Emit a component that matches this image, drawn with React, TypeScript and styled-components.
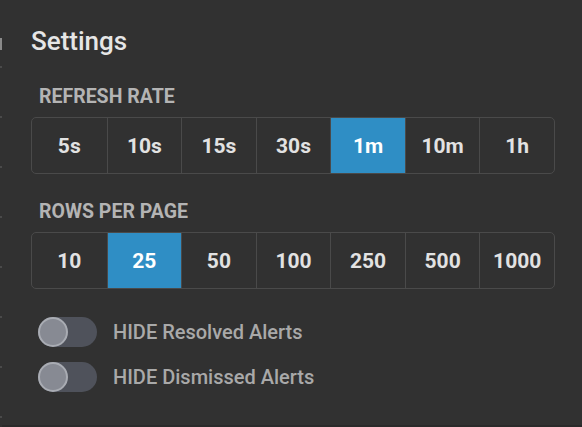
import { useState } from "react";
import styled, { createGlobalStyle } from "styled-components";

// #313131 (panel)
// #4a4a4a (group border)
// #2f8ec5 (selected)
// #4f525b (toggle track)

const Global = createGlobalStyle`
  html, body {
    margin: 0;
    padding: 0;
    background: #313131;
  }
  body {
    font-family: Roboto, "Liberation Sans", sans-serif;
  }
`;

const Page = styled.div`
  width: 582px;
  height: 427px;
  display: flex;
  flex-direction: row;
  background: #313131;
  overflow: hidden;
`;

const Ruler = styled.div`
  width: 2px;
  height: 100%;
  background:
    linear-gradient(to bottom, transparent 38px, #8a8a8a 38px, #8a8a8a 50px, transparent 50px) no-repeat,
    repeating-linear-gradient(
      to bottom,
      transparent 0px,
      transparent 16px,
      #4a4a4a 16px,
      #4a4a4a 18px,
      transparent 18px,
      transparent 50px
    );
  background-position: 0 0, 0 50px;
`;

const Panel = styled.div`
  flex: 1;
  display: flex;
  flex-direction: column;
  padding: 25px 27px 0 29px;
  border-bottom: 2px solid #2a2a2a;
`;

const Title = styled.h1`
  margin: 0;
  font-size: 26px;
  line-height: 33px;
  font-weight: 500;
  color: #e6e6e6;
`;

const SectionLabel = styled.div<{ $top: number }>`
  margin: ${(p) => p.$top}px 0 9px 8px;
  font-size: 19.5px;
  line-height: 22px;
  font-weight: 700;
  color: #b4b4b4;
`;

const Group = styled.div`
  box-sizing: border-box;
  display: grid;
  grid-template-columns: repeat(7, 1fr);
  height: 57px;
  border: 1px solid #4a4a4a;
  border-radius: 5px;
  overflow: hidden;
`;

const Option = styled.button<{ $active: boolean }>`
  border: none;
  border-left: 1px solid #4a4a4a;
  background: ${(p) => (p.$active ? "#2f8ec5" : "transparent")};
  color: ${(p) => (p.$active ? "#ffffff" : "#e2e2e2")};
  font-family: inherit;
  font-size: 21px;
  font-weight: 700;
  cursor: pointer;
  padding: 0;

  &:first-child {
    border-left: none;
  }
`;

const Toggles = styled.div`
  display: flex;
  flex-direction: column;
  gap: 15px;
  margin: 28px 0 0 7px;
`;

const ToggleRow = styled.label`
  display: flex;
  align-items: center;
  gap: 16px;
  cursor: pointer;
`;

const Track = styled.span<{ $on: boolean }>`
  width: 59px;
  height: 30px;
  border-radius: 15px;
  background: ${(p) => (p.$on ? "#2f8ec5" : "#4f525b")};
  display: flex;
  justify-content: ${(p) => (p.$on ? "flex-end" : "flex-start")};
`;

const Knob = styled.span`
  width: 26px;
  height: 26px;
  border-radius: 50%;
  background: #878a93;
  border: 2px solid #a9acb3;
`;

const ToggleText = styled.span`
  font-size: 20px;
  font-weight: 500;
  color: #a9a9a9;
`;

const rates = ["5s", "10s", "15s", "30s", "1m", "10m", "1h"];
const rows = ["10", "25", "50", "100", "250", "500", "1000"];

export default function App() {
  const [rate, setRate] = useState("1m");
  const [perPage, setPerPage] = useState("25");
  const [hideResolved, setHideResolved] = useState(false);
  const [hideDismissed, setHideDismissed] = useState(false);

  return (
    <Page>
      <Global />
      <Ruler />
      <Panel>
        <Title>Settings</Title>
        <SectionLabel $top={28}>REFRESH RATE</SectionLabel>
        <Group>
          {rates.map((r) => (
            <Option key={r} $active={r === rate} onClick={() => setRate(r)}>
              {r}
            </Option>
          ))}
        </Group>
        <SectionLabel $top={27}>ROWS PER PAGE</SectionLabel>
        <Group>
          {rows.map((r) => (
            <Option
              key={r}
              $active={r === perPage}
              onClick={() => setPerPage(r)}
            >
              {r}
            </Option>
          ))}
        </Group>
        <Toggles>
          <ToggleRow onClick={() => setHideResolved(!hideResolved)}>
            <Track $on={hideResolved}>
              <Knob />
            </Track>
            <ToggleText>HIDE Resolved Alerts</ToggleText>
          </ToggleRow>
          <ToggleRow onClick={() => setHideDismissed(!hideDismissed)}>
            <Track $on={hideDismissed}>
              <Knob />
            </Track>
            <ToggleText>HIDE Dismissed Alerts</ToggleText>
          </ToggleRow>
        </Toggles>
      </Panel>
    </Page>
  );
}
